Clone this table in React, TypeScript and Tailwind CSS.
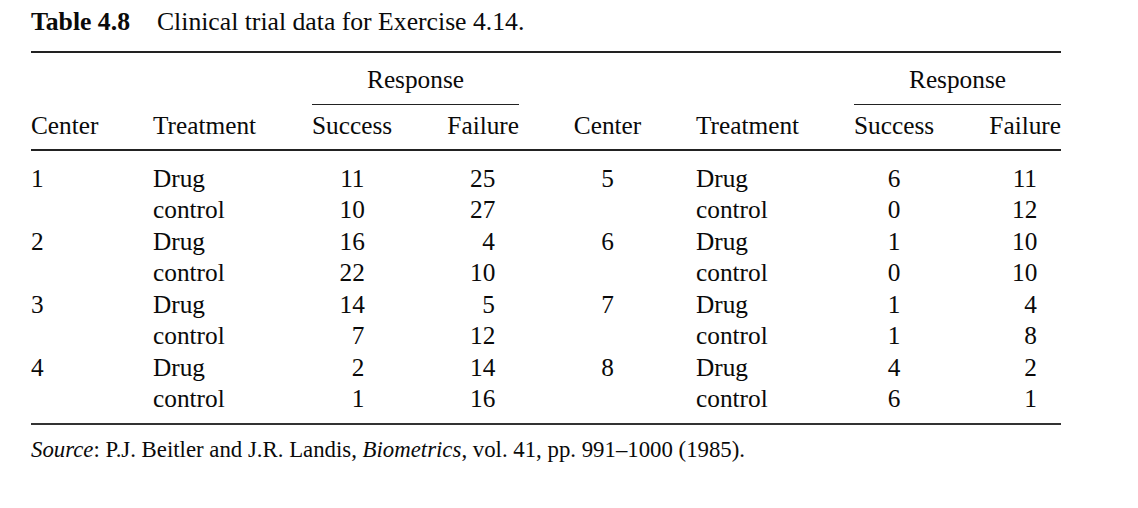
import React from "react";

type Row = { c?: string; t: string; s: string; f: string };

const left: Row[] = [
  { c: "1", t: "Drug", s: "11", f: "25" },
  { t: "control", s: "10", f: "27" },
  { c: "2", t: "Drug", s: "16", f: "4" },
  { t: "control", s: "22", f: "10" },
  { c: "3", t: "Drug", s: "14", f: "5" },
  { t: "control", s: "7", f: "12" },
  { c: "4", t: "Drug", s: "2", f: "14" },
  { t: "control", s: "1", f: "16" },
];

const right: Row[] = [
  { c: "5", t: "Drug", s: "6", f: "11" },
  { t: "control", s: "0", f: "12" },
  { c: "6", t: "Drug", s: "1", f: "10" },
  { t: "control", s: "0", f: "10" },
  { c: "7", t: "Drug", s: "1", f: "4" },
  { t: "control", s: "1", f: "8" },
  { c: "8", t: "Drug", s: "4", f: "2" },
  { t: "control", s: "6", f: "1" },
];

const cols = "grid grid-cols-[122px_159px_80px_127px_177px_158px_80px_127px]";

export default function App() {
  return (
    <div
      className="w-[1138px] h-[508px] bg-white text-[#0a0a0a] pl-[31px]"
      style={{ fontFamily: '"Liberation Serif", "Times New Roman", serif' }}
    >
      <div className="w-[1030px]">
        {/* Title */}
        <div className="pt-[7px] h-[51px] text-[25.7px] leading-[30px] flex">
          <span className="font-bold">Table 4.8</span>
          <span className="ml-[27px]">Clinical trial data for Exercise 4.14.</span>
        </div>
        <div className="h-[2px] bg-[#222]" />

        {/* Response super-header */}
        <div className={`${cols} text-[25.3px] h-[52px] items-end`}>
          <div />
          <div />
          <div className="col-span-2 flex flex-col items-stretch">
            <div className="text-center leading-[30px] pb-[10px]">Response</div>
            <div className="h-[1.5px] bg-[#222]" />
          </div>
          <div />
          <div />
          <div className="col-span-2 flex flex-col items-stretch">
            <div className="text-center leading-[30px] pb-[10px]">Response</div>
            <div className="h-[1.5px] bg-[#222]" />
          </div>
        </div>

        {/* Column header */}
        <div className={`${cols} text-[25.3px] leading-[30px] h-[44px] pb-[4px] items-center`}>
          <div>Center</div>
          <div>Treatment</div>
          <div>Success</div>
          <div className="text-right">Failure</div>
          <div className="text-center">Center</div>
          <div>Treatment</div>
          <div>Success</div>
          <div className="text-right">Failure</div>
        </div>
        <div className="h-[1.5px] bg-[#222]" />

        {/* Body */}
        <div className="pt-[12px] pb-[8px]">
          {left.map((l, i) => {
            const r = right[i];
            return (
              <div key={i} className={`${cols} text-[25.3px] leading-[31.5px] h-[31.5px]`}>
                <div>{l.c ?? ""}</div>
                <div>{l.t}</div>
                <div className="flex justify-center">
                  <span className="w-[25px] text-right">{l.s}</span>
                </div>
                <div className="flex justify-end pr-[24px]">
                  <span className="w-[25px] text-right">{l.f}</span>
                </div>
                <div className="text-center">{r.c ?? ""}</div>
                <div>{r.t}</div>
                <div className="text-center">{r.s}</div>
                <div className="flex justify-end pr-[24px]">
                  <span className="w-[25px] text-right">{r.f}</span>
                </div>
              </div>
            );
          })}
        </div>
        <div className="h-[2px] bg-[#333]" />

        {/* Source */}
        <div className="pt-[11px] text-[22.8px] leading-[28px]">
          <span className="italic">Source</span>: P.J. Beitler and J.R. Landis,{" "}
          <span className="italic">Biometrics</span>, vol. 41, pp. 991–1000 (1985).
        </div>
      </div>
    </div>
  );
}
